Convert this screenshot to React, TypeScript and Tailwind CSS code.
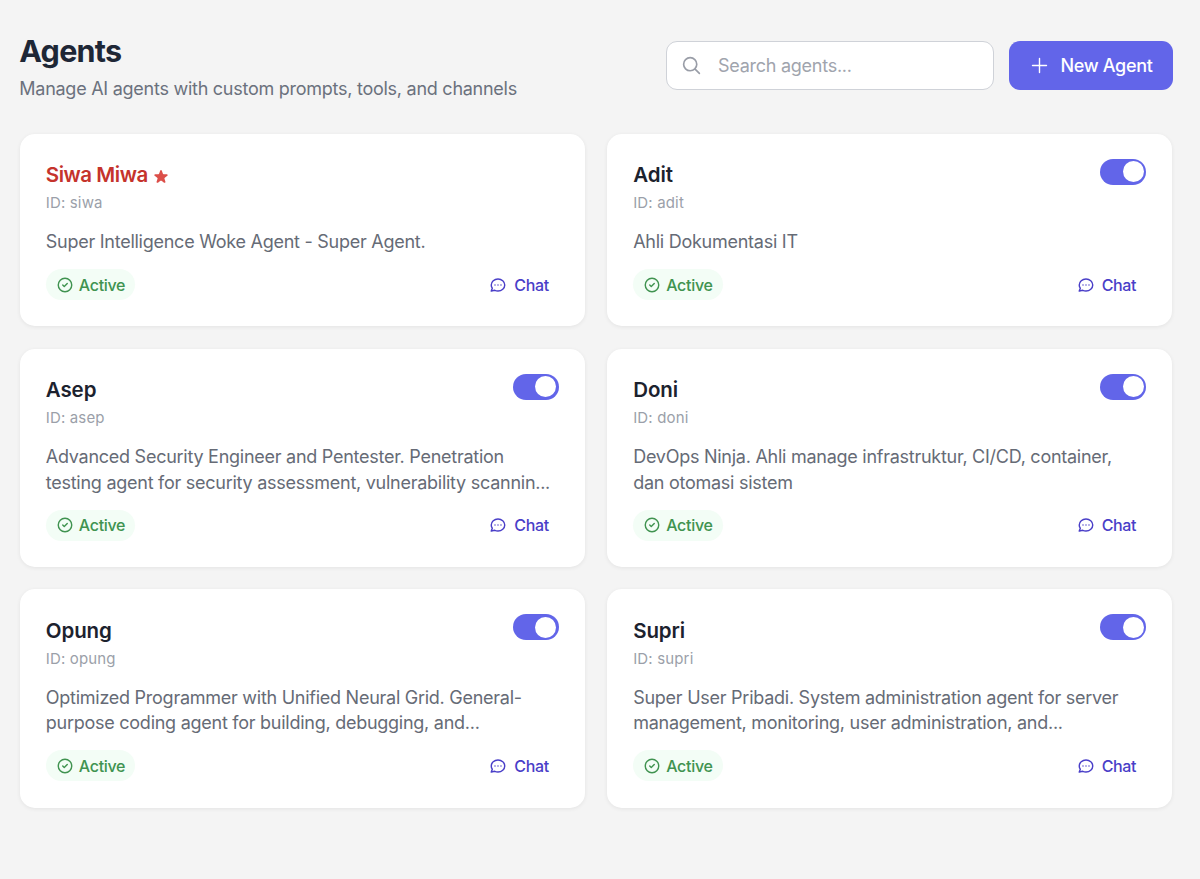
import React, { useState } from 'react';

interface Agent {
    id: string;
    name: string;
    description: string;
    isSuper?: boolean;
}

const AGENTS: Agent[] = [
    { id: 'siwa', name: 'Siwa Miwa', description: 'Super Intelligence Woke Agent - Super Agent.', isSuper: true },
    { id: 'adit', name: 'Adit', description: 'Ahli Dokumentasi IT' },
    {
        id: 'asep',
        name: 'Asep',
        description: 'Advanced Security Engineer and Pentester. Penetration testing agent for security assessment, vulnerability scannin...'
    },
    {
        id: 'doni',
        name: 'Doni',
        description: 'DevOps Ninja. Ahli manage infrastruktur, CI/CD, container, dan otomasi sistem'
    },
    {
        id: 'opung',
        name: 'Opung',
        description: 'Optimized Programmer with Unified Neural Grid. General-purpose coding agent for building, debugging, and...'
    },
    {
        id: 'supri',
        name: 'Supri',
        description: 'Super User Pribadi. System administration agent for server management, monitoring, user administration, and...'
    }
];

interface IconProps {
    d: string;
    className: string;
    strokeWidth?: number;
}

const Icon: React.FC<IconProps> = ({ d, className, strokeWidth = 1.9 }) => (
    <svg
        className={className}
        viewBox="0 0 24 24"
        fill="none"
        stroke="currentColor"
        strokeWidth={strokeWidth}
        strokeLinecap="round"
        strokeLinejoin="round"
    >
        <path d={d} />
    </svg>
);

const ICONS = {
    search: 'm21 21-5.197-5.197m0 0A7.5 7.5 0 1 0 5.196 5.196a7.5 7.5 0 0 0 10.607 10.607Z',
    plus: 'M12 4v16m8-8H4',
    check: 'M9 12l2 2 4-4m6 2a9 9 0 11-18 0 9 9 0 0118 0z',
    chat: 'M8 12h.01M12 12h.01M16 12h.01M21 12c0 4.418-4.03 8-9 8a9.863 9.863 0 01-4.255-.949L3 20l1.395-3.72C3.512 15.042 3 13.574 3 12c0-4.418 4.03-8 9-8s9 3.582 9 8z'
};

const Toggle: React.FC = () => {
    const [enabled, setEnabled] = useState(true);

    return (
        <button
            role="switch"
            aria-checked={enabled}
            onClick={() => setEnabled(!enabled)}
            className={`flex h-[26px] w-[46px] shrink-0 items-center rounded-full px-[2.5px] transition-colors ${
                enabled ? 'justify-end bg-[#6265e9]' : 'justify-start bg-gray-200'
            }`}
        >
            <span className="size-[21px] rounded-full bg-white" />
        </button>
    );
};

const AgentCard: React.FC<{ agent: Agent }> = ({ agent }) => (
    <div className="rounded-[15px] bg-white px-[26px] pt-[25px] pb-[26.3px] shadow-[0_1px_4px_rgba(0,0,0,0.07)]">
        <div className="flex h-[55px] items-start justify-between">
            <div>
                <h3
                    className={`mt-[0.6px] flex h-8 items-center gap-1 text-[20.5px] font-semibold ${
                        agent.isSuper ? 'tracking-[-0.45px] text-[#c5332c]' : 'tracking-[-0.1px] text-[#1c222e]'
                    }`}
                >
                    {agent.name}
                    {agent.isSuper && (
                        <svg className="mt-[3px] size-[18px] text-[#dc4f49]" viewBox="0 0 20 20" fill="currentColor">
                            <path d="M9.049 2.927c.3-.921 1.603-.921 1.902 0l1.07 3.292a1 1 0 00.95.69h3.462c.969 0 1.371 1.24.588 1.81l-2.8 2.034a1 1 0 00-.364 1.118l1.07 3.292c.3.921-.755 1.688-1.54 1.118l-2.8-2.034a1 1 0 00-1.175 0l-2.8 2.034c-.784.57-1.838-.197-1.539-1.118l1.07-3.292a1 1 0 00-.364-1.118L2.98 8.72c-.783-.57-.38-1.81.588-1.81h3.461a1 1 0 00.951-.69l1.07-3.292z" />
                        </svg>
                    )}
                </h3>
                <p className="text-[15px] leading-[23px] tracking-[0.15px] text-[#9b9fa9]">ID: {agent.id}</p>
            </div>
            {!agent.isSuper && <Toggle />}
        </div>
        <p className="mt-[15.2px] text-[18px] leading-[25.7px] tracking-[-0.26px] text-[#666b76]">{agent.description}</p>
        <div className="mt-[14.4px] flex items-center justify-between">
            <span className="flex h-[31px] items-center gap-[5px] rounded-full bg-[#f3fdf6] px-[10px] text-[16px] font-medium tracking-[-0.3px] text-[#409350]">
                <Icon d={ICONS.check} className="size-[18px]" />
                Active
            </span>
            <button className="flex h-[31px] items-center gap-[7px] px-[10px] text-[16px] font-medium tracking-[-0.35px] text-[#493ec8]">
                <Icon d={ICONS.chat} className="size-[18px]" />
                Chat
            </button>
        </div>
    </div>
);

const App: React.FC = () => {
    const [query, setQuery] = useState('');
    const visible = AGENTS.filter(a => a.name.toLowerCase().includes(query.toLowerCase()));

    return (
        <div className="min-h-screen bg-[#f4f4f4] pt-[31px] pr-[27.8px] pl-[19.8px] font-[Inter,sans-serif]">
            <header className="flex h-[102.8px] items-start justify-between">
                <div>
                    <h1 className="-ml-[0.5px] text-[30.5px] leading-10 font-bold tracking-[-0.75px] text-[#1e2736]">Agents</h1>
                    <p className="mt-[5px] -ml-[0.5px] text-[18px] leading-[26px] tracking-[-0.26px] text-[#6b717d]">
                        Manage AI agents with custom prompts, tools, and channels
                    </p>
                </div>
                <div className="mt-[10px] -mr-[0.8px] flex gap-[15px]">
                    <label className="flex h-[49px] w-[328px] items-center gap-4 rounded-[11px] border border-[#cfd2d8] bg-white px-[14px]">
                        <Icon d={ICONS.search} className="size-[21px] shrink-0 text-[#999da7]" />
                        <input
                            value={query}
                            onChange={e => setQuery(e.target.value)}
                            placeholder="Search agents..."
                            className="w-full text-[18px] tracking-[-0.26px] outline-none placeholder:text-[#a0a4ad]"
                        />
                    </label>
                    <button className="flex h-[49px] w-[164px] items-center justify-center gap-[10px] rounded-[11px] bg-[#6265e9] text-[18px] font-medium tracking-[-0.3px] text-white">
                        <Icon d={ICONS.plus} className="size-[21px]" strokeWidth={1.6} />
                        New Agent
                    </button>
                </div>
            </header>
            <div className="grid grid-cols-2 gap-[22.4px]">
                {visible.map(agent => (
                    <AgentCard key={agent.id} agent={agent} />
                ))}
            </div>
        </div>
    );
};

export default App;
